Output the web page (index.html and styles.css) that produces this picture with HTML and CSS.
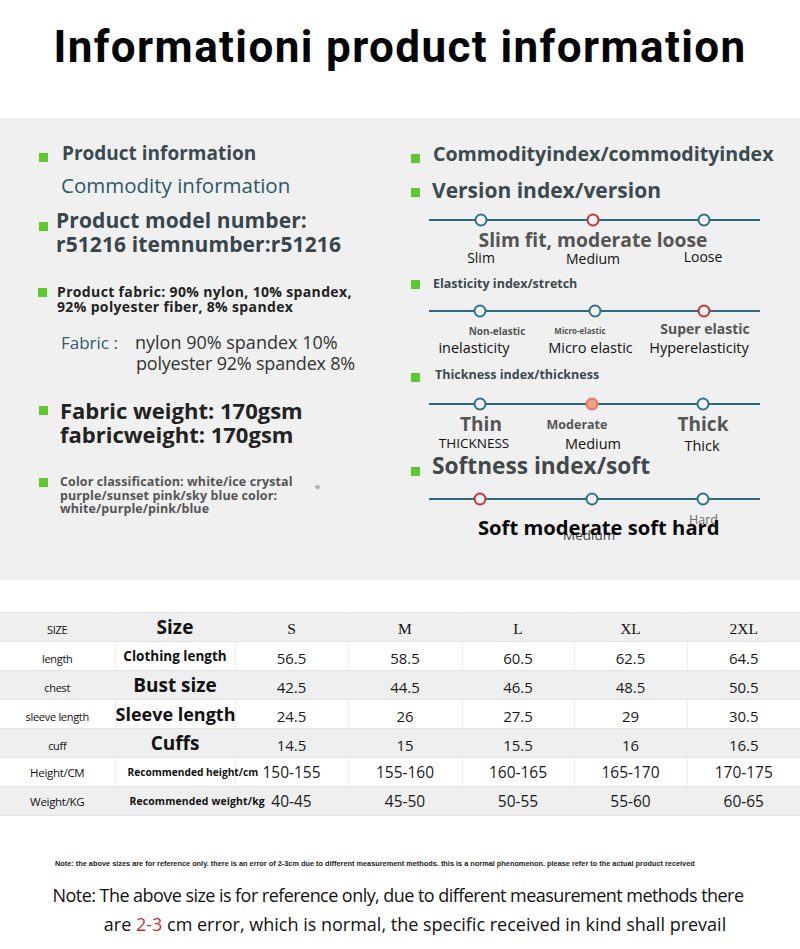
FILE: index.html
```html
<!DOCTYPE html>
<html lang="en">
<head>
<meta charset="utf-8">
<title>Product information</title>
<link rel="stylesheet" href="styles.css">
</head>
<body>
<header class="top">
  <h1 class="title">Informationi product information</h1>
</header>

<section class="panel">
  <div class="col left">
    <div class="item l1"><span class="dot d1"></span><span class="h-slate">Product information</span></div>
    <div class="item l2"><span class="sub-teal">Commodity information</span></div>
    <div class="item l3"><span class="dot d3"></span><span class="model">Product model number:<br>r51216 itemnumber:r51216</span></div>
    <div class="item l4"><span class="dot d4"></span><span class="fab">Product fabric: 90% nylon, 10% spandex,<br>92% polyester fiber, 8% spandex</span></div>
    <div class="item l5"><span class="fab-label">Fabric :</span><span class="fab-vals">nylon 90% spandex 10%<br><span class="fab-v2">polyester 92% spandex 8%</span></span></div>
    <div class="item l6"><span class="dot d6"></span><span class="weight">Fabric weight: 170gsm<br>fabricweight: 170gsm</span></div>
    <div class="item l7"><span class="dot d7"></span><span class="color">Color classification: white/ice crystal<br>purple/sunset pink/sky blue color:<br>white/purple/pink/blue</span><span class="smudge"></span></div>
  </div>

  <div class="col right">
    <div class="item r1"><span class="dot rd1"></span><span class="h-slate r1t">Commodityindex/commodityindex</span></div>
    <div class="item r2"><span class="dot rd2"></span><span class="h-slate r2t">Version index/version</span></div>

    <svg class="track t1" width="340" height="14" viewBox="0 0 340 14">
      <line x1="4" y1="7" x2="335" y2="7" stroke="#2c6a80" stroke-width="2"/>
      <circle cx="56" cy="7" r="5.5" fill="#f2f2f2" stroke="#2c7388" stroke-width="2"/>
      <circle cx="168" cy="7" r="5.5" fill="#f2f2f2" stroke="#c1343a" stroke-width="2"/>
      <circle cx="279" cy="7" r="5.5" fill="#f2f2f2" stroke="#2c7388" stroke-width="2"/>
    </svg>
    <div class="fit">Slim fit, moderate loose</div>
    <div class="labels lab1">
      <span>Slim</span><span class="m1">Medium</span><span class="lo">Loose</span>
    </div>

    <div class="item r3"><span class="dot rd3"></span><span class="h-small">Elasticity index/stretch</span></div>
    <svg class="track t2" width="340" height="14" viewBox="0 0 340 14">
      <line x1="4" y1="7" x2="335" y2="7" stroke="#2c6a80" stroke-width="2"/>
      <circle cx="55" cy="7" r="5.5" fill="#f2f2f2" stroke="#2c7388" stroke-width="2"/>
      <circle cx="170" cy="7" r="5.5" fill="#f2f2f2" stroke="#2c7388" stroke-width="2"/>
      <circle cx="279" cy="7" r="5.5" fill="#f2f2f2" stroke="#c1343a" stroke-width="2"/>
    </svg>
    <div class="labels lab2a">
      <span class="ne">Non-elastic</span><span class="me">Micro-elastic</span><span class="se">Super elastic</span>
    </div>
    <div class="labels lab2b">
      <span class="ie">inelasticity</span><span class="mie">Micro elastic</span><span class="he">Hyperelasticity</span>
    </div>

    <div class="item r4"><span class="dot rd4"></span><span class="h-small r4t">Thickness index/thickness</span></div>
    <svg class="track t3" width="340" height="14" viewBox="0 0 340 14">
      <line x1="4" y1="7" x2="335" y2="7" stroke="#2c6a80" stroke-width="2"/>
      <circle cx="55" cy="7" r="5.5" fill="#f2f2f2" stroke="#2c7388" stroke-width="2"/>
      <circle cx="167" cy="7" r="5.5" fill="#eba58c" stroke="#e07a5c" stroke-width="2"/>
      <circle cx="278" cy="7" r="5.5" fill="#f2f2f2" stroke="#2c7388" stroke-width="2"/>
    </svg>
    <div class="labels lab3a">
      <span class="big">Thin</span><span class="mod">Moderate</span><span class="big tk">Thick</span>
    </div>
    <div class="labels lab3b">
      <span class="thk">THICKNESS</span><span class="md3">Medium</span><span class="tk2">Thick</span>
    </div>

    <div class="item r5"><span class="dot rd5"></span><span class="soft-h">Softness index/soft</span></div>
    <svg class="track t4" width="340" height="14" viewBox="0 0 340 14">
      <line x1="4" y1="7" x2="335" y2="7" stroke="#2c6a80" stroke-width="2"/>
      <circle cx="55" cy="7" r="5.5" fill="#f2f2f2" stroke="#c1343a" stroke-width="2"/>
      <circle cx="167" cy="7" r="5.5" fill="#f2f2f2" stroke="#2c7388" stroke-width="2"/>
      <circle cx="278" cy="7" r="5.5" fill="#f2f2f2" stroke="#2c7388" stroke-width="2"/>
    </svg>
    <div class="softline">
      <span class="ghost g-hard">Hard</span>
      <span class="ghost g-med">Medium</span>
      <span class="soft-main">Soft moderate soft hard</span>
    </div>
  </div>
</section>

<table class="sizes">
  <colgroup>
    <col class="c1"><col class="c2"><col class="c3"><col class="c4"><col class="c5"><col class="c6"><col class="c7">
  </colgroup>
  <tr class="g">
    <td class="k">SIZE</td><td class="n big-n">Size</td>
    <td class="s">S</td><td class="s">M</td><td class="s">L</td><td class="s">XL</td><td class="s">2XL</td>
  </tr>
  <tr>
    <td class="k">length</td><td class="n cl">Clothing length</td>
    <td class="v">56.5</td><td class="v">58.5</td><td class="v">60.5</td><td class="v">62.5</td><td class="v">64.5</td>
  </tr>
  <tr class="g">
    <td class="k">chest</td><td class="n big-n">Bust size</td>
    <td class="v">42.5</td><td class="v">44.5</td><td class="v">46.5</td><td class="v">48.5</td><td class="v">50.5</td>
  </tr>
  <tr>
    <td class="k">sleeve length</td><td class="n sl">Sleeve length</td>
    <td class="v">24.5</td><td class="v">26</td><td class="v">27.5</td><td class="v">29</td><td class="v">30.5</td>
  </tr>
  <tr class="g">
    <td class="k">cuff</td><td class="n big-n">Cuffs</td>
    <td class="v">14.5</td><td class="v">15</td><td class="v">15.5</td><td class="v">16</td><td class="v">16.5</td>
  </tr>
  <tr>
    <td class="k kk">Height/CM</td><td class="n rec">Recommended height/cm</td>
    <td class="v vr">150-155</td><td class="v vr">155-160</td><td class="v vr">160-165</td><td class="v vr">165-170</td><td class="v vr">170-175</td>
  </tr>
  <tr class="g">
    <td class="k kk">Weight/KG</td><td class="n rec rec2">Recommended weight/kg</td>
    <td class="v vr">40-45</td><td class="v vr">45-50</td><td class="v vr">50-55</td><td class="v vr">55-60</td><td class="v vr">60-65</td>
  </tr>
</table>

<p class="tiny">Note: the above sizes are for reference only. there is an error of 2-3cm due to different measurement methods. this is a normal phenomenon. please refer to the actual product received</p>

<p class="note"><span class="n1">Note: The above size is for reference only, due to different measurement methods there</span><span class="n2">are <span class="red">2-3</span> cm error, which is normal, the specific received in kind shall prevail</span></p>
</body>
</html>
```

FILE: styles.css
```css
* { box-sizing: border-box; }
html, body { margin: 0; padding: 0; background: #ffffff; }
body { width: 800px; font-family: "Open Sans", "Noto Sans", sans-serif; color: #222; }

.top { height: 118px; padding-top: 22px; }
.title {
  margin: 0;
  font-family: Roboto, "Open Sans", sans-serif;
  font-weight: 700;
  font-size: 44px;
  line-height: 50px;
  letter-spacing: 1.4px;
  text-align: center;
  color: #050505;
}

.panel {
  height: 462px;
  background: #f0f0f0;
  display: flex;
  padding-left: 38px;
}
.col { display: flex; flex-direction: column; }
.left { width: 373px; padding-top: 23px; }
.right { width: 389px; padding-top: 24px; }

.item { display: flex; align-items: flex-start; }
.dot { flex: none; width: 9px; height: 9px; background: #5dc92c; }

.h-slate { font-weight: 700; color: #3a4a4f; }

/* left column */
.l1 { line-height: 24px; font-size: 19px; padding-left: 1px; }
.d1 { margin-top: 12px; margin-right: 14px; }
.l2 { margin-top: 8px; padding-left: 23px; }
.sub-teal { font-size: 20.5px; line-height: 24px; color: #2e5866; }
.l3 { margin-top: 11px; padding-left: 1px; }
.d3 { margin-top: 14px; margin-right: 8px; }
.model { font-size: 21px; line-height: 24px; font-weight: 700; color: #36464c; letter-spacing: 0.1px; }
.l4 { margin-top: 28px; }
.d4 { margin-top: 4px; margin-right: 10px; }
.fab { font-size: 14px; line-height: 15px; font-weight: 700; color: #222; letter-spacing: 0.35px; }
.l5 { margin-top: 18px; padding-left: 23px; line-height: 21px; }
.fab-label { width: 74px; flex: none; color: #2e5d6c; font-size: 17px; }
.fab-vals { color: #333; font-size: 18px; }
.fab-v2 { padding-left: 1px; letter-spacing: -0.2px; }
.l6 { margin-top: 24px; padding-left: 1px; }
.d6 { margin-top: 8px; margin-right: 12px; }
.weight { font-size: 22px; line-height: 24px; font-weight: 700; color: #222; }
.l7 { margin-top: 29px; padding-left: 1px; }
.d7 { margin-top: 3px; margin-right: 12px; }
.color { font-size: 12.5px; line-height: 13.5px; font-weight: 700; color: #555; letter-spacing: 0.1px; }
.smudge { flex: none; width: 5px; height: 4px; margin-left: 22px; margin-top: 10px; background: #9a9a9a; border-radius: 2px; opacity: .7; }

/* right column */
.rd1 { margin-top: 12px; margin-right: 13px; }
.r1t { font-size: 19.6px; line-height: 24px; }
.r2 { margin-top: 11px; }
.rd2 { margin-top: 11px; margin-right: 12px; }
.r2t { font-size: 21px; line-height: 26px; }

.track { display: block; margin-left: 14px; flex: none; }
.t1 { margin-top: 10px; }
.fit {
  margin-left: 14px; width: 336px; margin-top: 3px;
  text-align: center; font-size: 19.3px; line-height: 20px; font-weight: 700; color: #555;
}
.labels {
  margin-left: 14px; width: 336px;
  display: grid; grid-template-columns: 112px 112px 112px; justify-items: center;
  white-space: nowrap; color: #111;
}
.lab1 { font-size: 14px; line-height: 16px; grid-template-rows: 16px; }
.lab1 .m1 { margin-top: 1px; }
.lab1 .lo { margin-right: 4px; margin-top: -1px; }

.h-small { font-size: 12.5px; line-height: 18px; font-weight: 700; color: #3a4a4f; }
.r3 { margin-top: 9px; }
.rd3 { margin-top: 5px; margin-right: 13px; }
.t2 { margin-top: 11px; }
.lab2a { margin-top: 5px; line-height: 16px; grid-template-rows: 16px; font-weight: 700; color: #555; }
.ne { font-size: 10px; margin-left: 32px; }
.me { font-size: 8px; margin-right: 26px; }
.se { font-size: 14px; margin-top: -2px; }
.lab2b { font-size: 14.5px; line-height: 18px; grid-template-rows: 18px; }
.ie { margin-right: 14px; }
.mie { margin-right: 5px; }
.he { margin-right: 12px; }

.r4 { margin-top: 9px; }
.rd4 { margin-top: 7px; margin-right: 15px; }
.t3 { margin-top: 13px; }
.lab3a { margin-top: 2px; line-height: 22px; grid-template-rows: 22px; font-weight: 700; color: #555; }
.lab3a .big { font-size: 19px; }
.lab3a .mod { font-size: 12.5px; margin-right: 32px; margin-top: 1px; }
.lab3a .tk { margin-right: 4px; }
.lab3b { margin-top: -1px; font-size: 13.5px; line-height: 18px; grid-template-rows: 18px; }
.thk { margin-right: 14px; }
.md3 { font-size: 14.5px; margin-top: 1px; }
.tk2 { font-size: 14.5px; margin-top: 3px; margin-right: 6px; }

.r5 { margin-top: 1px; }
.rd5 { margin-top: 14px; margin-right: 12px; }
.soft-h { font-size: 22.7px; line-height: 26px; font-weight: 700; color: #43484b; }
.t4 { margin-top: 13px; }
.softline { position: relative; margin-left: 14px; width: 336px; margin-top: 9px; height: 24px; }
.soft-main {
  position: relative; z-index: 1; display: block;
  padding-left: 53px; font-size: 20.2px; line-height: 24px; font-weight: 700; color: #080808; white-space: nowrap;
}
.ghost { position: absolute; z-index: 0; color: #666; white-space: nowrap; }
.g-hard { left: 264px; top: -3px; font-size: 12.5px; line-height: 16px; color: #6a6a6a; }
.g-med { left: 138px; top: 12px; font-size: 13.5px; line-height: 16px; color: #444; }

/* table */
.sizes {
  margin-top: 32px;
  width: 800px;
  border-collapse: collapse;
  table-layout: fixed;
  color: #111;
}
.c1 { width: 115px; } .c2 { width: 120px; } .c3 { width: 113px; } .c4 { width: 114px; }
.c5 { width: 112px; } .c6 { width: 113px; } .c7 { width: 113px; }
.sizes tr { height: 29px; background: #ffffff; }
.sizes tr.g { background: #efefef; }
.sizes td {
  padding: 0; text-align: center; vertical-align: middle; white-space: nowrap;
  border-top: 1px solid #e2e2e2; border-left: 1px solid #ececec;
  overflow: visible;
}
.sizes td:first-child { border-left: none; }
.sizes tr:first-child td { border-top: 1px solid #e6e6e6; }
.sizes tr:last-child td { border-bottom: 1px solid #e2e2e2; }
.k { font-size: 11px; letter-spacing: -0.3px; padding-top: 4px !important; }
.kk { font-size: 11.5px; padding-top: 1px !important; }
.n { font-weight: 700; }
.big-n { font-size: 19px; line-height: 22px; }
.cl { font-size: 13.5px; }
.sl { font-size: 18px; }
.rec { text-align: left !important; padding-left: 12px !important; font-size: 10.2px; }
.rec2 { padding-left: 14px !important; font-size: 10.4px; letter-spacing: 0.15px; }
.s { font-family: "Liberation Serif", "Times New Roman", serif; font-size: 15.5px; padding-top: 3px !important; }
.v { font-size: 15px; font-weight: 400; color: #1a1a1a; padding-top: 3px !important; }
.vr { padding-top: 0 !important; font-size: 15.5px; }

.tiny {
  margin: 43px 0 0 0;
  padding-left: 55px;
  font-family: "Liberation Sans", Arial, sans-serif;
  font-weight: 700;
  font-size: 7.35px;
  line-height: 10px;
  color: #222;
  white-space: nowrap;
}
.note {
  margin: 12px 0 0 0;
  text-align: center;
  font-family: "Open Sans", sans-serif;
  font-size: 18px;
  line-height: 29px;
  color: #111;
}
.note .n1 { display: block; letter-spacing: -0.55px; padding-right: 4px; }
.note .n2 { display: block; padding-left: 30px; }
.red { color: #c8313a; }
```
